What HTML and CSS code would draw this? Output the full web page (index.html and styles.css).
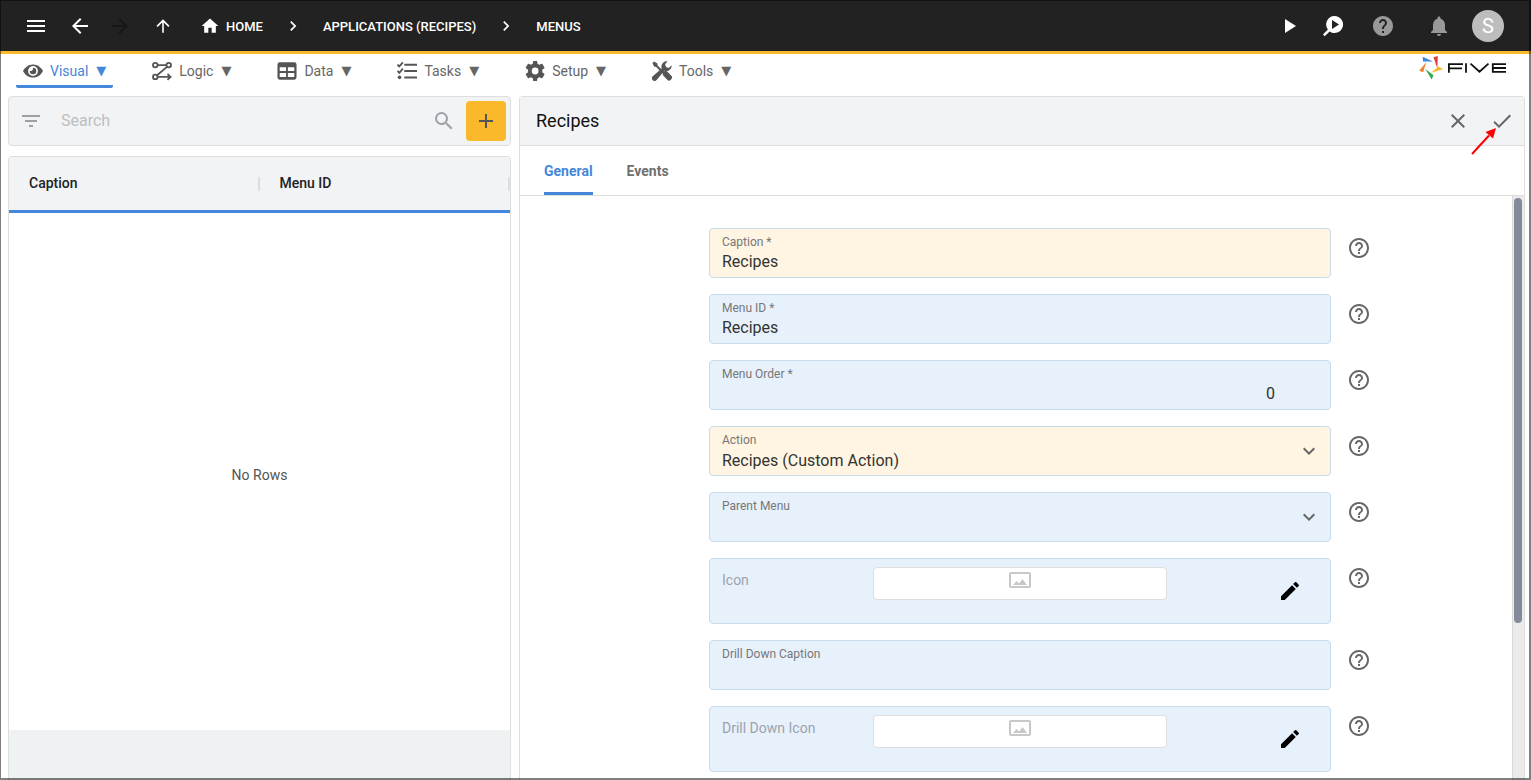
FILE: index.html
```html
<!DOCTYPE html>
<html lang="en">
<head>
<meta charset="utf-8">
<title>Five - Menus</title>
<link rel="stylesheet" href="styles.css">
</head>
<body>
<svg class="sprite" aria-hidden="true">
  <symbol id="i-menu" viewBox="0 0 24 24"><path d="M3 18h18v-2H3v2zm0-5h18v-2H3v2zm0-7v2h18V6H3z"/></symbol>
  <symbol id="i-back" viewBox="0 0 24 24"><path d="M20 11H7.83l5.59-5.59L12 4l-8 8 8 8 1.41-1.41L7.83 13H20v-2z"/></symbol>
  <symbol id="i-forward" viewBox="0 0 24 24"><path d="M12 4l-1.41 1.41L16.17 11H4v2h12.17l-5.58 5.59L12 20l8-8z"/></symbol>
  <symbol id="i-up" viewBox="0 0 24 24"><path d="M6.700 13 5.500 11.800 12 5.300l6.500 6.500-1.200 1.200-4.500-4.500V18.700h-1.600V8.500z"/></symbol>
  <symbol id="i-home" viewBox="0 0 24 24"><path d="M10 20v-6h4v6h5v-8h3L12 3 2 12h3v8z"/></symbol>
  <symbol id="i-next" viewBox="0 0 24 24"><path d="M10 6 8.590 7.410 13.170 12l-4.580 4.590L10 18l6-6z"/></symbol>
  <symbol id="i-play" viewBox="0 0 24 24"><path d="M7 5v14l11-7z"/></symbol>
  <symbol id="i-inspect" viewBox="0 0 24 24"><path fill-rule="evenodd" d="M13.500 2a8.500 8.500 0 1 1-4.900 15.400L3.700 22.200 2 20.500l4.900-4.900A8.500 8.500 0 0 1 13.500 2zM11 6v9l7-4.500z"/></symbol>
  <symbol id="i-help-solid" viewBox="0 0 24 24"><path d="M12 2C6.480 2 2 6.480 2 12s4.480 10 10 10 10-4.480 10-10S17.520 2 12 2zm1 17h-2v-2h2v2zm2.070-7.750-.900.920C13.450 12.900 13 13.500 13 15h-2v-.500c0-1.100.450-2.100 1.170-2.830l1.240-1.260c.370-.360.590-.860.590-1.410 0-1.100-.900-2-2-2s-2 .900-2 2H8c0-2.210 1.790-4 4-4s4 1.790 4 4c0 .880-.360 1.680-.930 2.250z"/></symbol>
  <symbol id="i-help" viewBox="0 0 24 24"><path d="M11 18h2v-2h-2v2zm1-16C6.480 2 2 6.480 2 12s4.480 10 10 10 10-4.480 10-10S17.520 2 12 2zm0 18c-4.410 0-8-3.590-8-8s3.590-8 8-8 8 3.590 8 8-3.590 8-8 8zm0-14c-2.210 0-4 1.790-4 4h2c0-1.100.900-2 2-2s2 .900 2 2c0 2-3 1.750-3 5h2c0-2.250 3-2.500 3-5 0-2.210-1.790-4-4-4z"/></symbol>
  <symbol id="i-bell" viewBox="0 0 24 24"><path d="M12 22c1.100 0 2-.900 2-2h-4c0 1.100.890 2 2 2zm6-6v-5c0-3.070-1.640-5.640-4.500-6.320V4c0-.830-.670-1.500-1.500-1.500s-1.500.670-1.500 1.500v.680C7.630 5.360 6 7.920 6 11v5l-2 2v1h16v-1l-2-2z"/></symbol>
  <symbol id="i-eye" viewBox="1 1 22 22"><path d="M12 4.800C7 4.800 3 8 1 12c2 4 6 7.200 11 7.200s9-3.200 11-7.200C21 8 17 4.800 12 4.800z"/><circle cx="12" cy="12" r="5.400" fill="#fff"/><path d="M12 8.400a3.600 3.600 0 1 1-3.600 3.600c1.800.600 4-1 3.600-3.600z"/></symbol>
  <symbol id="i-logic" viewBox="1 1 22 22"><g fill="none" stroke="currentColor" stroke-width="2"><circle cx="4.600" cy="5.500" r="2.500"/><circle cx="19.400" cy="5.500" r="2.500"/><circle cx="4.600" cy="18.500" r="2.500"/><path d="M7.100 5.500h9.800M17.500 7.400 6.600 16.700M7.100 18.500h14M18 15.300l3.400 3.200-3.400 3.200"/></g></symbol>
  <symbol id="i-table" viewBox="1 1 22 22"><path fill-rule="evenodd" d="M4 2.500h16a2.500 2.500 0 0 1 2.500 2.500v14a2.500 2.500 0 0 1-2.500 2.500H4A2.500 2.500 0 0 1 1.500 19V5A2.500 2.500 0 0 1 4 2.500zM4 8v4h7V8zm9 0v4h7V8zM4 14.300v4.200h7v-4.200zm9 0v4.200h7v-4.200z"/></symbol>
  <symbol id="i-tasks" viewBox="1 1 22 22"><path d="M9 4h14v2.200H9zm0 7h14v2.200H9zm0 7h14v2.200H9z"/><circle cx="3.800" cy="19" r="2"/><path d="m1.500 5 2 2 4-4.500M1.500 12l2 2 4-4.500" fill="none" stroke="currentColor" stroke-width="2"/></symbol>
  <symbol id="i-gear" viewBox="0 2 22.500 20"><path d="M19.500 12l-.1-1.400 2.300-1.800a.6.600 0 0 0 .2-.7l-2.300-4a.6.600 0 0 0-.7-.2l-2.800 1.100-2-1.100-.5-3a.6.600 0 0 0-.6-.5H9.800a.6.600 0 0 0-.6.500l-.5 3-2 1.100-2.800-1.100a.6.600 0 0 0-.7.200l-2.300 4a.6.600 0 0 0 .2.700l2.400 1.800-.1 1.400.1 1.400-2.400 1.800a.6.600 0 0 0-.2.700l2.300 4a.6.600 0 0 0 .7.200L6.700 19l2 1.100.5 3a.6.600 0 0 0 .6.500H13a.6.600 0 0 0 .6-.5l.5-3 2-1.100 2.800 1.100a.6.600 0 0 0 .7-.2l2.300-4a.6.600 0 0 0-.2-.7l-2.300-1.800zm-8.100 3.800a3.800 3.800 0 1 1 0-7.600 3.800 3.800 0 0 1 0 7.600z"/></symbol>
  <symbol id="i-tools" viewBox="1 1 22 22"><path d="M1.500 3.200 3.200 1.500 7 3.800v2l4 4-1.600 1.600-4-4h-2zM13.600 12.800l1.500-1.200 2.400.6 4.900 5.200a2.400 2.400 0 0 1 0 3.400l-1 1a2.400 2.400 0 0 1-3.400 0l-4.900-5.200-.5-2.300zM22.600 5.600a6 6 0 0 1-8 6.100L6.300 21.600a3 3 0 1 1-4.200-4.200l9.600-8.100a6 6 0 0 1 6.500-8L15.400 4.700l1 3 3 .9z"/></symbol>
  <symbol id="i-filter" viewBox="0 0 24 24"><path d="M10 18h4v-2h-4v2zM3 6v2h18V6H3zm3 7h12v-2H6v2z"/></symbol>
  <symbol id="i-search" viewBox="0 0 24 24"><path d="M15.500 14h-.790l-.280-.270A6.471 6.471 0 0 0 16 9.500 6.500 6.500 0 1 0 9.500 16c1.610 0 3.090-.590 4.230-1.570l.270.280v.790l5 4.990L20.490 19l-4.990-5zm-6 0C7.010 14 5 11.990 5 9.500S7.010 5 9.500 5 14 7.010 14 9.500 11.990 14 9.500 14z"/></symbol>
  <symbol id="i-plus" viewBox="0 0 24 24"><path d="M19 13h-6v6h-2v-6H5v-2h6V5h2v6h6v2z"/></symbol>
  <symbol id="i-close" viewBox="0 0 24 24"><path d="M19 6.410 17.590 5 12 10.590 6.410 5 5 6.410 10.590 12 5 17.590 6.410 19 12 13.410 17.590 19 19 17.590 13.410 12z"/></symbol>
  <symbol id="i-check" viewBox="0 0 24 24"><path d="M9 16.170 4.830 12l-1.420 1.410L9 19 21 7l-1.410-1.410z"/></symbol>
  <symbol id="i-down" viewBox="0 0 24 24"><path d="M7.410 8.590 12 13.170l4.590-4.580L18 10l-6 6-6-6z"/></symbol>
  <symbol id="i-pencil" viewBox="0 0 24 24"><path d="M3 17.250V21h3.750L17.810 9.940l-3.750-3.750L3 17.250zM20.710 7.040a1 1 0 0 0 0-1.410l-2.340-2.340a1 1 0 0 0-1.410 0l-1.830 1.830 3.750 3.750 1.830-1.830z"/></symbol>
  <symbol id="i-image" viewBox="0 0 24 18"><rect x="2" y="2" width="20" height="14" rx="1" fill="none" stroke="currentColor" stroke-width="2"/><path d="M5 14l3.500-4 2.500 2.500L14.500 8l4.500 6z"/></symbol>
</svg>

<div class="app">
  <header class="topbar">
    <button class="bar-btn" aria-label="Menu"><svg><use href="#i-menu"/></svg></button>
    <button class="bar-btn bar-btn-back" aria-label="Back"><svg><use href="#i-back"/></svg></button>
    <button class="bar-btn bar-btn-off" aria-label="Forward" disabled><svg><use href="#i-forward"/></svg></button>
    <button class="bar-btn" aria-label="Up"><svg><use href="#i-up"/></svg></button>
    <nav class="crumbs" aria-label="Breadcrumb">
      <a href="#home"><svg class="crumb-home"><use href="#i-home"/></svg>HOME</a>
      <svg class="crumb-sep"><use href="#i-next"/></svg>
      <a href="#applications">APPLICATIONS (RECIPES)</a>
      <svg class="crumb-sep"><use href="#i-next"/></svg>
      <a href="#menus">MENUS</a>
    </nav>
    <div class="bar-actions">
      <button class="bar-btn" aria-label="Run"><svg><use href="#i-play"/></svg></button>
      <button class="bar-btn" aria-label="Inspect"><svg><use href="#i-inspect"/></svg></button>
      <button class="bar-btn bar-btn-dim" aria-label="Help"><svg><use href="#i-help-solid"/></svg></button>
      <button class="bar-btn bar-btn-dim bar-btn-bell" aria-label="Notifications"><svg><use href="#i-bell"/></svg></button>
      <button class="avatar" aria-label="Account">S</button>
    </div>
  </header>

  <div class="menubar">
    <nav class="menus" aria-label="Main">
      <a class="menu menu-on" href="#visual"><svg><use href="#i-eye"/></svg><span>Visual</span><span class="tri">▼</span></a>
      <a class="menu" href="#logic"><svg><use href="#i-logic"/></svg><span>Logic</span><span class="tri">▼</span></a>
      <a class="menu" href="#data"><svg><use href="#i-table"/></svg><span>Data</span><span class="tri">▼</span></a>
      <a class="menu" href="#tasks"><svg><use href="#i-tasks"/></svg><span>Tasks</span><span class="tri">▼</span></a>
      <a class="menu" href="#setup"><svg><use href="#i-gear"/></svg><span>Setup</span><span class="tri">▼</span></a>
      <a class="menu" href="#tools"><svg><use href="#i-tools"/></svg><span>Tools</span><span class="tri">▼</span></a>
    </nav>
    <svg class="logo" viewBox="0 0 88 24" role="img" aria-label="Five">
      <path fill="#3f87dc" d="M3.700.700 14 5.500H4z"/>
      <path fill="#e23b3b" d="M14.500 1.300 18.800 0l-.4 12.500z"/>
      <path fill="#f7b92a" d="M24 13.200 12 16.800l7.600-6.200z"/>
      <path fill="#37a852" d="M6.300 13l8.200 6.300-1.800 4.200z"/>
      <path fill="#f47f2b" d="M7.200 6.300 4.200 16.200.200 14.800z"/>
      <g fill="none" stroke="#111" stroke-width="1.800"><path d="M29.900 16.800V8.200H44M30 12.400h13M47 7.300v9.500M51.500 7.600l9 8.100 9-8.100M87 8.200H73.800v7.700H87M74 12h13"/></g>
    </svg>
  </div>

  <main class="panels">
    <section class="list">
      <div class="search">
        <button class="plain" aria-label="Filter"><svg><use href="#i-filter"/></svg></button>
        <input type="search" placeholder="Search" aria-label="Search">
        <button class="plain" aria-label="Search"><svg><use href="#i-search"/></svg></button>
        <button class="add" aria-label="Add"><svg><use href="#i-plus"/></svg></button>
      </div>
      <div class="grid">
        <table>
          <thead><tr><th scope="col">Caption</th><th scope="col">Menu ID</th></tr></thead>
        </table>
        <p class="empty">No Rows</p>
        <div class="grid-foot"></div>
      </div>
    </section>

    <section class="detail">
      <div class="detail-head">
        <h1>Recipes</h1>
        <button class="plain" aria-label="Cancel"><svg><use href="#i-close"/></svg></button>
        <button class="plain save" aria-label="Save"><svg><use href="#i-check"/></svg></button>
        <svg class="pointer" viewBox="0 0 26 28" aria-hidden="true"><path d="M1 27 18 8.500" stroke="#f00" stroke-width="2"/><path fill="#f00" d="M25 1l-3 10.500-7.500-6.500z"/></svg>
      </div>
      <div class="tabs" role="tablist">
        <button class="tab tab-on" role="tab" aria-selected="true">General</button>
        <button class="tab" role="tab" aria-selected="false">Events</button>
      </div>
      <div class="scroll">
        <form class="form">
          <div class="row">
            <div class="field field-warm"><label for="caption">Caption *</label><input id="caption" type="text" value="Recipes"></div>
            <button type="button" class="help" aria-label="Help: Caption"><svg><use href="#i-help"/></svg></button>
          </div>
          <div class="row">
            <div class="field"><label for="menu-id">Menu ID *</label><input id="menu-id" type="text" value="Recipes"></div>
            <button type="button" class="help" aria-label="Help: Menu ID"><svg><use href="#i-help"/></svg></button>
          </div>
          <div class="row">
            <div class="field field-number"><label for="order">Menu Order *</label><input id="order" type="text" inputmode="numeric" value="0"></div>
            <button type="button" class="help" aria-label="Help: Menu Order"><svg><use href="#i-help"/></svg></button>
          </div>
          <div class="row">
            <div class="field field-warm"><label for="action">Action</label><select id="action"><option>Recipes (Custom Action)</option></select><svg class="caret"><use href="#i-down"/></svg></div>
            <button type="button" class="help" aria-label="Help: Action"><svg><use href="#i-help"/></svg></button>
          </div>
          <div class="row">
            <div class="field"><label for="parent">Parent Menu</label><select id="parent"><option></option></select><svg class="caret"><use href="#i-down"/></svg></div>
            <button type="button" class="help" aria-label="Help: Parent Menu"><svg><use href="#i-help"/></svg></button>
          </div>
          <div class="row">
            <div class="field picker"><span class="picker-label">Icon</span><div class="preview"><svg><use href="#i-image"/></svg></div><button type="button" class="edit" aria-label="Edit Icon"><svg><use href="#i-pencil"/></svg></button></div>
            <button type="button" class="help" aria-label="Help: Icon"><svg><use href="#i-help"/></svg></button>
          </div>
          <div class="row">
            <div class="field"><label for="drill">Drill Down Caption</label><input id="drill" type="text"></div>
            <button type="button" class="help" aria-label="Help: Drill Down Caption"><svg><use href="#i-help"/></svg></button>
          </div>
          <div class="row">
            <div class="field picker"><span class="picker-label">Drill Down Icon</span><div class="preview"><svg><use href="#i-image"/></svg></div><button type="button" class="edit" aria-label="Edit Drill Down Icon"><svg><use href="#i-pencil"/></svg></button></div>
            <button type="button" class="help" aria-label="Help: Drill Down Icon"><svg><use href="#i-help"/></svg></button>
          </div>
        </form>
        <div class="track"><div class="thumb"></div></div>
      </div>
    </section>
  </main>
</div>
</body>
</html>
```

FILE: styles.css
```css
* { box-sizing: border-box; }

body {
  margin: 0;
  font-family: Roboto, "Liberation Sans", sans-serif;
  font-size: 14px;
  color: #222;
  background: #fff;
}

button, input, select { font: inherit; color: inherit; }
button { padding: 0; border: 0; background: none; cursor: pointer; }
a { color: inherit; text-decoration: none; }
svg { display: block; width: 24px; height: 24px; fill: currentColor; flex: none; }
.sprite { position: absolute; width: 0; height: 0; }

.app {
  display: flex;
  flex-direction: column;
  height: 100vh;
  overflow: hidden;
}

/* Window frame drawn over the page edge */
.app::after {
  content: "";
  position: fixed;
  inset: 0;
  border: solid rgba(0, 0, 0, 0.5);
  border-width: 1px 2px 2px 1px;
  pointer-events: none;
}

/* Top bar */
.topbar {
  display: flex;
  align-items: center;
  flex: none;
  height: 54px;
  padding: 1px 27px 0 24px;
  border-bottom: 3px solid #f9b92b;
  background: #222;
  color: #fff;
}
.bar-btn { margin-right: 20px; }
.bar-btn-back { margin-right: 16px; }
.bar-btn-off { margin-right: 19px; color: #161616; }
.bar-btn-dim { color: #999; }
.crumbs {
  display: flex;
  align-items: center;
  margin-left: 5px;
  font-size: 13px;
  font-weight: 500;
}
.crumbs a { display: flex; align-items: center; gap: 6px; }
.crumb-home { width: 20px; height: 20px; }
.crumb-sep { width: 20px; height: 20px; margin: 0 20px; }
.bar-actions { display: flex; align-items: center; margin-left: auto; }
.bar-actions .bar-btn { margin-right: 26px; }
.bar-actions .bar-btn:first-child { margin-right: 19px; }
.bar-actions .bar-btn-bell { margin: 0 21px 0 6px; }
.avatar {
  width: 32px;
  height: 32px;
  border-radius: 50%;
  background: #bdbdbd;
  color: #fff;
  font-size: 20px;
}

/* Menu bar */
.menubar {
  display: flex;
  justify-content: space-between;
  flex: none;
  padding: 0 24px 8px 16px;
}
.menus { display: flex; gap: 32px; }
.menu {
  display: flex;
  align-items: center;
  gap: 7px;
  height: 34px;
  padding: 3px 7px 0;
  border-bottom: 3px solid transparent;
  color: #666;
}
.menu svg { width: 20px; height: 20px; color: #555; }
.menu-on { color: #4487db; border-color: #4487db; border-radius: 2px; }
.tri { margin-left: 1px; font-family: "DejaVu Sans", sans-serif; font-size: 13px; line-height: 16px; }
.logo { width: 88px; height: 24px; margin-top: 2px; }

/* Panels */
.panels {
  display: grid;
  grid-template-columns: 1fr 2fr;
  gap: 8px;
  flex: 1;
  min-height: 0;
  padding: 0 6px 0 8px;
}
.list { display: flex; flex-direction: column; gap: 10px; min-width: 0; }
.search {
  display: flex;
  align-items: center;
  height: 50px;
  padding: 0 4px 0 10px;
  border: 1px solid #dedede;
  border-radius: 4px;
  background: #f1f3f5;
}
.search input {
  flex: 1;
  min-width: 0;
  margin: 0 8px 0 18px;
  padding: 0 0 2px;
  border: 0;
  background: none;
  font-size: 16px;
}
.search input::placeholder { color: #bdbfc2; }
.search .plain { color: #9aa1a8; }
.add {
  display: grid;
  place-items: center;
  width: 40px;
  height: 40px;
  margin-left: 10px;
  border-radius: 4px;
  background: #f9b92b;
  color: #555;
}
.grid {
  display: flex;
  flex-direction: column;
  flex: 1;
  min-height: 0;
  border: 1px solid #dedede;
  border-bottom: 0;
  border-radius: 4px 4px 0 0;
}
.grid table {
  width: 100%;
  table-layout: fixed;
  border-spacing: 0;
  background: #f1f3f5;
  border-bottom: 3px solid #4487db;
}
.grid th {
  height: 53px;
  padding: 0 20px 2px;
  text-align: left;
  font-weight: 500;
  background: linear-gradient(#dedede, #dedede) right center / 2px 14px no-repeat;
}
.empty {
  display: grid;
  place-items: center;
  flex: 1;
  margin: 0;
  padding-top: 6px;
  color: #555;
}
.grid-foot { height: 50px; background: #eef2f3; }

/* Detail */
.detail {
  display: flex;
  flex-direction: column;
  min-width: 0;
  min-height: 0;
  border: 1px solid #dedede;
  border-bottom: 0;
  border-radius: 4px 4px 0 0;
}
.detail-head {
  position: relative;
  display: flex;
  align-items: center;
  gap: 20px;
  flex: none;
  height: 49px;
  padding: 0 10px 0 16px;
  border-bottom: 1px solid #dedede;
  background: #f1f3f5;
}
.detail-head h1 {
  flex: 1;
  margin: 0;
  padding-bottom: 2px;
  font-size: 18px;
  font-weight: 400;
  color: #111;
}
.detail-head .plain { color: #666; }
.pointer {
  position: absolute;
  right: 27px;
  top: 30px;
  width: 26px;
  height: 28px;
}
.tabs {
  display: flex;
  gap: 34px;
  flex: none;
  height: 50px;
  padding-left: 24px;
  border-bottom: 1px solid #dedede;
}
.tab {
  padding-top: 3px;
  border-bottom: 3px solid transparent;
  font-weight: 700;
  color: #707070;
}
.tab-on { color: #4487db; border-color: #4487db; border-radius: 2px 2px 0 0; }

.scroll { display: flex; flex: 1; min-height: 0; overflow: hidden; }
.form {
  display: flex;
  flex-direction: column;
  gap: 16px;
  flex: 1;
  padding-top: 32px;
}
.row {
  display: grid;
  grid-template-columns: 189fr 622fr 181fr;
  align-items: start;
}
.field {
  grid-column: 2;
  position: relative;
  height: 50px;
  padding: 6px 12px 0;
  border: 1px solid #c9dcec;
  border-radius: 4px;
  background: #e7f1fc;
}
.field-warm { background: #fff5e2; }
.field label {
  display: block;
  font-size: 12px;
  line-height: 14px;
  color: #777;
}
.field input, .field select {
  display: block;
  width: 100%;
  height: 24px;
  padding: 0;
  border: 0;
  outline: 0;
  background: none;
  appearance: none;
  font-size: 16px;
  color: #333;
}
.field select { height: 26px; }
.field-number input { padding-right: 43px; text-align: right; }
.caret {
  position: absolute;
  right: 9px;
  top: 12px;
  color: #666;
  pointer-events: none;
}
.help { margin: 8px 0 0 16px; color: #666; justify-self: start; }

.picker {
  display: grid;
  grid-template-columns: 151fr 294fr 151fr;
  align-items: start;
  height: 66px;
  padding: 8px 12px 0;
}
.picker-label { padding-top: 5px; color: #9ca3ab; }
.preview {
  display: flex;
  justify-content: center;
  height: 33px;
  padding-top: 3px;
  border: 1px solid #dedede;
  border-radius: 4px;
  background: #fff;
  color: #c8c8c8;
}
.preview svg { height: 18px; }
.edit { justify-self: end; margin: 12px 16px 0 0; color: #000; }

.track {
  flex: none;
  width: 12px;
  padding: 2px 2px 0 1px;
  border-left: 1px solid #d8d8d8;
  background: #ebebeb;
}
.thumb { height: 73%; border-radius: 4px; background: #838a99; }
```
